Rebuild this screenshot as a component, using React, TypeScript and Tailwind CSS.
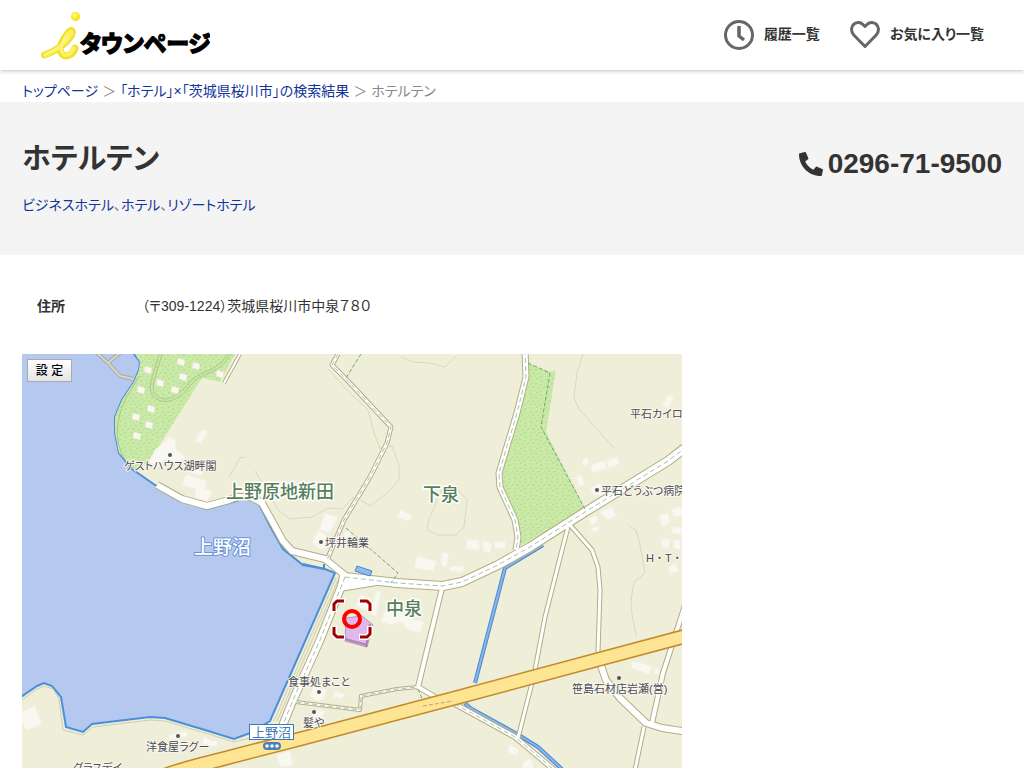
import { FaPhoneAlt } from "react-icons/fa"

interface Road {
  points: string
  width: number
  dashed?: boolean
}

interface MapLabel {
  text: string
  x: number
  y: number
}

const roads: Road[] = [
  { points: "338,354 332,365 347,380 391,427 387,443 370,477 344,520 327,560", width: 3, dashed: true },
  { points: "240,354 224,383", width: 2 },
  { points: "442,588 418,687 437,698", width: 4 },
  { points: "296,702 360,710 361,696 397,689 418,687", width: 2, dashed: true },
  { points: "568,527 562,550 545,617 534,675 518,738", width: 3 },
  { points: "570,525 592,550 598,567 600,590 598,652", width: 3 },
  { points: "599,660 606,680 620,698 646,723 662,728 682,731 700,733", width: 6 },
  { points: "690,590 676,633 663,673 652,723", width: 4 },
  { points: "644,727 635,770", width: 3 },
  { points: "455,704 515,737 552,768 560,775", width: 4, dashed: true },
  { points: "345,577 320,640 293,700 282,727", width: 7, dashed: true },
  { points: "525,350 526,377 517,413 499,473 500,487 515,520 518,537 516,550", width: 5, dashed: true },
  { points: "157,485 182,499 207,506 229,500 237,497 251,497 262,503 283,541 292,551 325,559 347,577 370,581", width: 6 },
  { points: "345,577 397,583 443,586 462,582 498,565 530,547 585,512 668,461 690,444", width: 8, dashed: true },
]

const canals = ["543,545 505,568 475,683", "465,703 470,708 517,734 538,747 565,772"]

const buildings = [
  "170,436 176,441 175,448 185,457 178,463 165,459 158,466 148,463 156,449 163,443",
  "202,429 208,432 201,444 195,441",
  "186,474 207,481 205,489 213,492 207,501 194,497 196,489 182,485",
  "191,468 203,472 201,476 189,472",
  "325,513 338,517 330,533 319,530",
  "318,530 326,535 332,547 320,549 312,543",
  "346,531 352,533 348,538 343,536",
  "401,510 413,516 408,521 397,517",
  "591,465 605,460 607,469 592,473",
  "606,461 617,457 620,464 609,468",
  "582,459 588,458 589,464 583,466",
  "576,477 581,475 585,484 579,487",
  "598,483 604,486 606,497 593,495 590,490",
  "669,395 674,398 668,409 662,405",
  "600,512 611,507 617,516 608,520",
  "587,519 596,515 598,521 592,525",
  "592,528 600,526 598,531 590,532",
  "659,515 668,513 670,523 662,527",
  "671,510 682,506 682,516 674,517",
  "672,527 682,527 682,535 671,533",
  "661,539 670,539 669,548 661,547",
  "673,540 680,540 681,550 673,548",
  "668,567 676,563 678,571 670,574",
  "467,539 479,540 480,550 466,549",
  "483,541 492,543 490,553 483,551",
  "495,541 506,542 505,548 494,548",
  "417,556 437,561 433,571 414,568",
  "442,552 449,553 446,568 441,565",
  "451,566 464,566 463,572 449,571",
  "361,594 371,599 368,611 355,606",
  "376,590 381,592 376,617 371,614",
  "384,611 394,609 409,618 424,622 421,633 407,629 402,622 391,625 381,622",
  "314,686 327,690 323,700 316,701 310,695",
  "335,691 345,694 342,699 333,697",
  "312,710 325,711 322,718 311,718",
  "276,755 290,751 293,765 281,767",
  "168,735 186,731 188,736 170,741",
  "204,736 210,740 218,741 217,747 202,744",
  "22,711 35,706 42,724 32,728 28,731 22,724",
  "632,661 643,663 652,667 650,675 640,671 631,668",
  "655,669 659,668 658,675 654,674",
  "510,744 519,750 515,756 507,751",
  "524,761 531,758 534,768 522,768",
]

// small cabins inside the park
const cabins = [
  [148, 370], [181, 362], [196, 366], [183, 377], [160, 383], [141, 390], [175, 390],
  [151, 409], [136, 417], [149, 425], [137, 436], [220, 374],
]

const contours = [
  "328,369 345,388 368,410 374,433 380,449",
  "380,448 392,446 399,465 399,480 387,493 370,506 361,500",
  "255,471 265,487 278,510 290,519 312,517 328,508 342,509 354,497",
  "229,477 235,467 240,458 245,457",
  "401,357 413,362 430,363 445,367 456,356",
  "427,530 429,519 443,487 455,486 467,500 464,527 456,535 438,535 427,530",
  "583,354 577,373 574,398 579,409 601,434 614,448",
  "628,525 636,530 640,545 643,562 645,573 634,582 631,600 632,614 636,636",
]

const placeLabels: MapLabel[] = [
  { text: "ゲストハウス湖畔閣", x: 124, y: 470 },
  { text: "坪井輪業", x: 325, y: 547 },
  { text: "平石カイロ", x: 630, y: 418 },
  { text: "平石どうぶつ病院", x: 601, y: 495 },
  { text: "食事処まこと", x: 288, y: 686 },
  { text: "髪や", x: 303, y: 727 },
  { text: "洋食屋ラグー", x: 146, y: 751 },
  { text: "グラスデイ", x: 73, y: 772 },
  { text: "笹島石材店岩瀬(営)", x: 572, y: 693 },
]

const areaLabels: MapLabel[] = [
  { text: "上野原地新田", x: 226, y: 498 },
  { text: "下泉", x: 423, y: 501 },
  { text: "中泉", x: 386, y: 615 },
]

const placeDots = [[170, 455], [321, 542], [597, 490], [319, 692], [314, 712], [178, 736], [619, 678]]

function Logo() {
  return (
    <svg viewBox="40 8 170 52" className="h-[52px] w-[170px]" role="img" aria-label="iタウンページ">
      <defs>
        <linearGradient id="logoYellow" x1="0" y1="0" x2="1" y2="1">
          <stop offset="0" stopColor="#fff04a" />
          <stop offset="1" stopColor="#f3df1c" />
        </linearGradient>
      </defs>
      <g fill="none" strokeLinecap="round" strokeLinejoin="round">
        <path d="M44.5 54C54 51 66 43 71 35C74 29 71 28 68 32C61 41 58 49 62 53C66 57 73 54 75 47" stroke="#f0e028" strokeWidth="7" />
        <path d="M45 54C54 51 65 43 70 35C73 30 71 29 68 33C62 41 59 49 63 53C67 56 72 52 74 47" stroke="#f9f062" strokeWidth="4" />
        <path d="M46 53C54 50 64 43 69 35M67 34C62 41 60 48 63 52" stroke="#fdf9a0" strokeWidth="1" />
      </g>
      <circle cx="75.5" cy="15.5" r="4.7" fill="url(#logoYellow)" />
      <circle cx="75" cy="14.5" r="2.2" fill="#fbf57c" />
      <text
        x="80"
        y="51"
        fill="#000"
        stroke="#000"
        strokeWidth="1"
        strokeLinejoin="round"
        className="text-[23px] font-black [font-feature-settings:'palt']"
      >
        タウンページ
      </text>
    </svg>
  )
}

function ClockIcon() {
  return (
    <svg viewBox="0 0 30 30" className="size-[30px]" fill="none" stroke="#666" aria-hidden="true">
      <circle cx="15" cy="15" r="13.5" strokeWidth="3" />
      <path d="M15 6V16L20 20" strokeWidth="3.5" />
    </svg>
  )
}

function HeartIcon() {
  return (
    <svg viewBox="0 0 30 28" className="h-[28px] w-[30px]" fill="none" stroke="#666" strokeWidth="3" strokeLinejoin="round" aria-hidden="true">
      <path d="M15 25.5L3.8 14C0.5 10 1 5.5 4 3C7.5 0.5 11 1.5 13 3.5L15 5.5L17 3.5C19 1.5 22.5 0.500 26 3C29 5.5 29.5 10 26.2 14Z" />
    </svg>
  )
}

function AreaMap() {
  return (
    <svg viewBox="22 354 660 414" className="block w-full" role="img" aria-label="地図">
      <defs>
        <pattern id="grass" width="16" height="14" patternUnits="userSpaceOnUse">
          <rect width="16" height="14" fill="#cbe9a9" />
          <path
            d="M1 1h2v1h1v1h-2v-1h-1zM5 2h1v2h-1zM8 0h3v1h-1v1h-2zM12 2h2v1h1v1h-3zM2 5h3v1h-2v1h-1zM7 4h1v1h2v1h-1v1h-2zM12 6h2v2h-1v-1h-1zM0 8h2v2h-1v-1h-1zM4 8h2v1h1v1h-3zM9 9h3v1h-2v1h-1zM14 10h2v1h-2zM2 12h3v1h-3zM7 11h1v2h-1zM11 12h4v1h-2v1h-1v-1h-1z"
            fill="#bbe294"
          />
        </pattern>
      </defs>

      <rect x="22" y="354" width="660" height="414" fill="#efeed8" />

      {/* lake and park */}
      <path
        d="M15 345H130L134 354L140 362L139 370L134 382L122 400L115 417L115 433L119 453L132 469L155 485L182 499L207 509L229 503L250 497L258 502L270 526L283 549L303 565L325 569L335 573L270 721L250 733L234 739L205 730L165 718L150 717L92 724L83 732L66 727L61 697L52 686L44 683L37 686L15 701Z"
        fill="#b4c8f0"
        stroke="#4a90d9"
        strokeWidth="2"
      />
      <polygon
        points="135,354 235,354 220,382 202,378 148,463 134,469 119,453 115,433 115,417 122,400 134,382 139,370 140,362"
        fill="url(#grass)"
      />
      <polygon points="528,363 550,372 556,370 546,432 585,509 520,546 515,520 501,487 499,475 515,427 526,387" fill="url(#grass)" />
      <g fill="none" stroke="#a9c98b">
        <path d="M139 376L125 400C116 420 114 440 124 458L136 472" />
        <path d="M159 354C154 374 146 388 153 396C161 405 176 404 190 386C202 370 220 376 230 354" />
        <path d="M162 354C157 374 149 388 156 395C164 402 174 400 187 385C200 368 217 374 227 354" />
      </g>
      <g fill="none" strokeLinejoin="round">
        <path d="M96 352L108 363L120 376L134 379M108 363L121 352" stroke="#aaa9a0" strokeWidth="4" />
        <path d="M96 352L108 363L120 376L134 379M108 363L121 352" stroke="#d7d6cd" strokeWidth="2" />
        <path d="M22 700L37 689L44 686L53 689L59 699L63 730L83 735L93 727L150 720L165 721L205 733L234 742L250 738" stroke="#cfceb0" />
        <path d="M336 578L274 721M339 578L277 721" stroke="#cfceb0" />
      </g>
      {contours.map((points) => (
        <polyline key={points} points={points} fill="none" stroke="#dbd8bc" strokeLinejoin="round" />
      ))}

      <g fill="#f8f7f0" stroke="#f3f0e6">
        {buildings.map((points) => (
          <polygon key={points} points={points} />
        ))}
      </g>
      {cabins.map(([x, y]) => (
        <polygon key={`${x}-${y}`} points={`${x - 3},${y - 4} ${x + 4},${y - 2} ${x + 3},${y + 4} ${x - 4},${y + 2}`} fill="#f8f7f0" stroke="#eedfd0" strokeWidth="0.5" />
      ))}

      {canals.map((points) => (
        <g key={points} fill="none" strokeLinejoin="round">
          <polyline points={points} stroke="#4489d3" strokeWidth="4" />
          <polyline points={points} stroke="#8fb4ea" strokeWidth="2" />
        </g>
      ))}

      {/* local roads: casings first so that junctions stay open */}
      <g fill="none" strokeLinejoin="round">
        {roads.map((road) => (
          <polyline key={road.points} points={road.points} stroke="#b3ad83" strokeWidth={road.width + 2} />
        ))}
        <path d="M340 573L335 600L343 591L380 585L400 583Z" fill="#fff" stroke="#b3ad83" />
        {roads.map((road) => (
          <polyline key={road.points} points={road.points} stroke="#fff" strokeWidth={road.width} />
        ))}
        {roads
          .filter((road) => road.dashed)
          .map((road) => (
            <polyline key={road.points} points={road.points} stroke="#a3c2ac" strokeDasharray="5 3" />
          ))}
        <path
          d="M528 363L550 373L541 427L585 509M361 354L346 378M346 528L398 573L391 583M418 689L425 706L453 701"
          stroke="#73a878"
          strokeDasharray="4 2"
        />
      </g>
      <polygon points="357,566 372,571 370,576 355,571" fill="#94b9ed" stroke="#4489d3" />
      <path d="M303 564L325 569M324 564V570" fill="none" stroke="#4a90d9" strokeWidth="2" />

      {/* highway */}
      <g fill="none">
        <path d="M140 785C180 768 205 764 230 757L300 739L455 698L600 659L690 635" stroke="#c28b2b" strokeWidth="15" />
        <path d="M140 785C180 768 205 764 230 757L300 739L455 698L600 659L690 635" stroke="#fee594" strokeWidth="12" />
        <path d="M423 706L453 701" stroke="#b7a56b" strokeDasharray="4 2" />
      </g>

      {/* target building and marker */}
      <polygon points="346,618 362,616 373,625 367,647 345,641" fill="#dfb9ee" stroke="#b393bd" />
      <path d="M345 639L367 645M370 624L366 647" stroke="#aa86ae" strokeWidth="2" />
      <g fill="none" strokeLinejoin="round">
        <path d="M334 612V604L337 601H345M359 601H367L370 604V612M370 626V634L367 637H359M345 637H337L334 634V626" stroke="#fff" strokeWidth="6" />
        <path d="M334 611V604L337 601H344M360 601H367L370 604V611M370 627V634L367 637H360M344 637H337L334 634V627" stroke="#a00000" strokeWidth="3" />
        <circle cx="352" cy="619" r="8" stroke="#f00" strokeWidth="4" />
      </g>

      {placeDots.map(([x, y]) => (
        <circle key={`${x}-${y}`} cx={x} cy={y} r="2" fill="#555" />
      ))}
      <g className="text-[11px] [paint-order:stroke]" fill="#4c4c54" stroke="#f8f7ee" strokeWidth="2">
        {placeLabels.map((label) => (
          <text key={label.text} x={label.x} y={label.y}>
            {label.text}
          </text>
        ))}
        <text x="646" y="562" className="[font-feature-settings:normal]">
          H・T・
        </text>
      </g>
      <g className="text-[18px] font-medium [paint-order:stroke]" fill="#587f5c" stroke="#fff" strokeWidth="3" strokeLinejoin="round">
        {areaLabels.map((label) => (
          <text key={label.text} x={label.x} y={label.y}>
            {label.text}
          </text>
        ))}
      </g>
      <text x="194" y="554" className="text-[19px] font-medium [paint-order:stroke]" fill="#fff" stroke="#6b93d6" strokeWidth="2" strokeLinejoin="round">
        上野沼
      </text>

      {/* traffic signal sign */}
      <rect x="249.5" y="724.5" width="44" height="15" fill="#fff" stroke="#3f78b5" />
      <text x="252" y="737" className="text-[13px]" fill="#3f78b5">
        上野沼
      </text>
      <rect x="263" y="742" width="18" height="8" rx="4" fill="#4b7fb8" />
      <circle cx="267" cy="746" r="1.8" fill="#fff" />
      <circle cx="272" cy="746" r="1.8" fill="#fff" />
      <circle cx="277" cy="746" r="1.8" fill="#fff" />
    </svg>
  )
}

export default function App() {
  return (
    <div className="bg-white font-['Liberation_Sans','Noto_Sans_CJK_JP',sans-serif] text-sm text-[#333] [font-feature-settings:'palt']">
      <header className="relative flex h-[70px] items-center justify-between bg-white px-10 shadow-[0_1px_4px_rgba(0,0,0,0.25)]">
        <a href="#">
          <Logo />
        </a>
        <nav className="flex items-center gap-[30px] font-bold">
          <a href="#" className="flex items-center gap-2.5">
            <ClockIcon />
            <span className="pb-0.5">履歴一覧</span>
          </a>
          <a href="#" className="flex items-center gap-2.5">
            <HeartIcon />
            <span className="pb-0.5">お気に入り一覧</span>
          </a>
        </nav>
      </header>

      <nav aria-label="パンくず" className="flex h-8 items-end gap-1 px-[22px] pb-px text-[#888]">
        <a href="#" className="text-[#12339a]">トップページ</a>
        <span>＞</span>
        <a href="#" className="text-[#12339a]">「ホテル」×「茨城県桜川市」の検索結果</a>
        <span>＞</span>
        <span>ホテルテン</span>
      </nav>

      <section className="flex justify-between bg-[#f4f4f4] px-[22px] pt-9 pb-10">
        <div>
          <h1 className="text-[29px] leading-[42px] font-bold">ホテルテン</h1>
          <p className="mt-[15px] leading-5 text-[#888]">
            <a href="#" className="text-[#12339a]">ビジネスホテル</a>、
            <a href="#" className="text-[#12339a]">ホテル</a>、
            <a href="#" className="text-[#12339a]">リゾートホテル</a>
          </p>
        </div>
        <p className="flex h-[52px] items-center gap-[5px] text-[28px] font-bold">
          <FaPhoneAlt className="size-6" aria-hidden="true" />
          0296-71-9500
        </p>
      </section>

      <main className="px-[22px] pt-[41px]">
        <dl className="flex px-[15px] leading-5">
          <dt className="w-[105px] font-bold">住所</dt>
          <dd>（〒309-1224）茨城県桜川市中泉７８０</dd>
        </dl>
        <div className="relative mt-[38px] max-w-[660px]">
          <AreaMap />
          <button
            type="button"
            className="absolute top-[5px] left-[5px] h-[23px] w-[45px] border border-[#aaa] bg-linear-to-b from-white to-[#e4e4e4] text-xs font-medium text-black"
          >
            設 定
          </button>
        </div>
      </main>
    </div>
  )
}
